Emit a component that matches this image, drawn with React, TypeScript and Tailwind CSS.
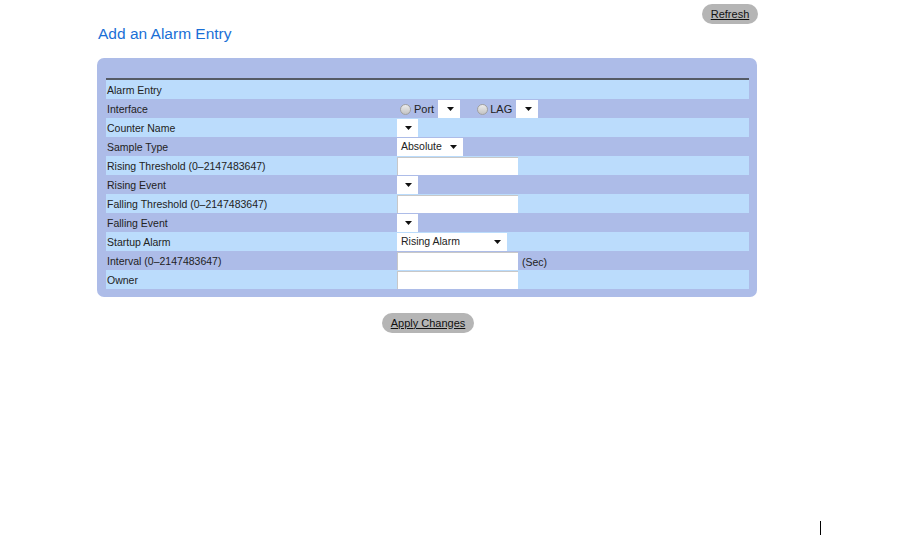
import React from "react";

const font = { fontFamily: '"Liberation Sans", Arial, sans-serif' };

function Caret() {
  return (
    <svg width="7" height="4" viewBox="0 0 7 4" className="shrink-0">
      <path d="M0 0h7L3.5 4z" fill="#111" />
    </svg>
  );
}

function Dropdown({ label = "", width }: { label?: string; width: string }) {
  return (
    <div className={`flex h-[18px] items-center justify-between bg-white pl-[4px] pr-[6px] text-[10.5px] text-[#222] ${width}`}>
      <span>{label}</span>
      <Caret />
    </div>
  );
}

function TextBox({ width = "w-[121px]" }: { width?: string }) {
  return <div className={`h-[18px] border-t border-l border-[#c8c8c8] bg-white ${width}`} />;
}

function Radio() {
  return (
    <span className="mt-[2px] inline-block h-[11px] w-[11px] rounded-full border border-[#a0a0a0] bg-gradient-to-b from-[#ececec] to-[#c4c4c4]" />
  );
}

type Row = { label: string; control?: React.ReactNode };

const rows: Row[] = [
  { label: "Alarm Entry" },
  {
    label: "Interface",
    control: (
      <div className="flex items-center text-[11px] text-[#222]">
        <span className="ml-[3px] flex"><Radio /></span>
        <span className="ml-[3px] mt-[2px]">Port</span>
        <div className="ml-[4px] mt-[1px]"><Dropdown width="w-[22px]" /></div>
        <span className="ml-[17px] flex"><Radio /></span>
        <span className="ml-[2px] mt-[2px]">LAG</span>
        <div className="ml-[4px] mt-[1px]"><Dropdown width="w-[22px]" /></div>
      </div>
    ),
  },
  { label: "Counter Name", control: <Dropdown width="w-[21px]" /> },
  { label: "Sample Type", control: <Dropdown label="Absolute" width="w-[66px]" /> },
  { label: "Rising Threshold (0–2147483647)", control: <TextBox /> },
  { label: "Rising Event", control: <Dropdown width="w-[21px]" /> },
  { label: "Falling Threshold (0–2147483647)", control: <TextBox /> },
  { label: "Falling Event", control: <Dropdown width="w-[21px]" /> },
  { label: "Startup Alarm", control: <Dropdown label="Rising Alarm" width="w-[110px]" /> },
  {
    label: "Interval (0–2147483647)",
    control: (
      <div className="flex items-center">
        <TextBox />
        <span className="ml-[4px] mt-[4px] text-[10.5px] text-[#222]">(Sec)</span>
      </div>
    ),
  },
  { label: "Owner", control: <TextBox /> },
];

function PillButton({ children, className = "" }: { children: React.ReactNode; className?: string }) {
  return (
    <div className={`flex h-[20px] items-center justify-center rounded-full bg-[#b5b5b5] text-[11px] text-[#111] underline ${className}`}>
      {children}
    </div>
  );
}

export default function App() {
  return (
    <div className="relative h-[535px] w-[900px] bg-white" style={font}>
      <div className="flex justify-end pr-[142px] pt-[4px]">
        <PillButton className="w-[56px]">Refresh</PillButton>
      </div>
      <h1 className="ml-[98px] mt-[1px] text-[15.5px] leading-[18px] text-[#1a6fd6]">Add an Alarm Entry</h1>
      <div className="ml-[97px] mt-[15px] w-[660px] rounded-[7px] bg-[#adbce8] pb-[8px] pl-[9px] pr-[8px] pt-[20px]">
        <div className="h-[2px] bg-[#555b66]" />
        <div className="flex flex-col">
          {rows.map((row, i) => (
            <div
              key={row.label}
              className={`flex h-[19px] items-center ${i % 2 === 0 ? "bg-[#bbdcfc]" : "bg-[#adbce8]"}`}
            >
              <div className="mt-[2px] w-[291px] pl-[1px] text-[10.5px] text-[#222]">{row.label}</div>
              <div>{row.control}</div>
            </div>
          ))}
        </div>
      </div>
      <div className="ml-[382px] mt-[16px]">
        <PillButton className="w-[92px]">Apply Changes</PillButton>
      </div>
      <div className="absolute left-[820px] top-[521px] h-[14px] w-[1px] bg-black" />
    </div>
  );
}
